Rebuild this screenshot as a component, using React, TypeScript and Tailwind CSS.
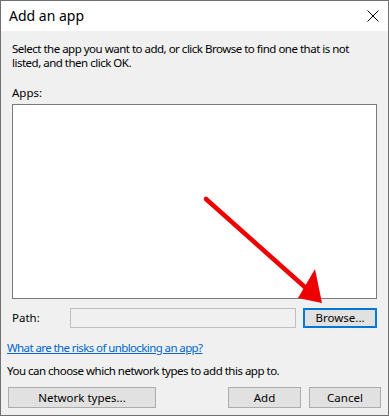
export default function App() {
  return (
    <div className="relative w-[389px] h-[416px] bg-[#f0f0f0] border border-[#707070] font-['Noto_Sans',sans-serif] text-[11.5px] text-black overflow-hidden">
      {/* title bar */}
      <div className="flex items-center justify-between h-[30px] bg-white pl-[8px] pr-[9px]">
        <span className="text-[14px] leading-none">Add an app</span>
        <svg width="12" height="12" viewBox="0 0 12 12" className="text-black">
          <path d="M0.5 0.5 L11.5 11.5 M11.5 0.5 L0.5 11.5" stroke="currentColor" strokeWidth="1" fill="none" />
        </svg>
      </div>

      <div className="px-[11px] pt-[11px]">
        <p className="leading-[14px] tracking-[-0.5px] whitespace-nowrap">
          Select the app you want to add, or click Browse to find one that is not
          <br />
          listed, and then click OK.
        </p>
        <p className="mt-[16px] leading-[14px]">Apps:</p>
        <div className="mt-[4px] h-[195px] bg-white border border-[#7a7a7a]" />

        <div className="flex items-center mt-[9px]">
          <span className="w-[58px]">Path:</span>
          <div className="h-[20px] w-[227px] border border-[#bfbfbf] bg-[#f0f0f0]" />
          <button className="ml-[7px] h-[20px] w-[74px] border-2 border-[#0078d7] bg-[#e1e1e1] leading-none">
            Browse...
          </button>
        </div>
      </div>

      <div className="px-[6px]">
        <a className="block mt-[13px] text-[#0066cc] underline leading-[14px] tracking-[-0.6px] whitespace-nowrap" href="#">
          What are the risks of unblocking an app?
        </a>
        <p className="mt-[9px] leading-[14px] tracking-[-0.5px] whitespace-nowrap">
          You can choose which network types to add this app to.
        </p>

        <div className="flex items-center mt-[9px] pl-[1px]">
          <button className="h-[21px] w-[148px] border border-[#adadad] bg-[#e1e1e1] leading-none">
            Network types...
          </button>
          <button className="ml-auto h-[21px] w-[73px] border border-[#adadad] bg-[#e1e1e1] leading-none">
            Add
          </button>
          <button className="ml-[8px] mr-[1px] h-[21px] w-[72px] border border-[#adadad] bg-[#e1e1e1] leading-none">
            Cancel
          </button>
        </div>
      </div>

      {/* red arrow annotation */}
      <svg className="absolute left-0 top-0 pointer-events-none" width="389" height="416" viewBox="0 0 389 416">
        <line x1="205" y1="198" x2="306" y2="288" stroke="#ee0000" strokeWidth="4.5" strokeLinecap="round" />
        <polygon points="321,302 297,297 314,268" fill="#ee0000" />
      </svg>
    </div>
  );
}
